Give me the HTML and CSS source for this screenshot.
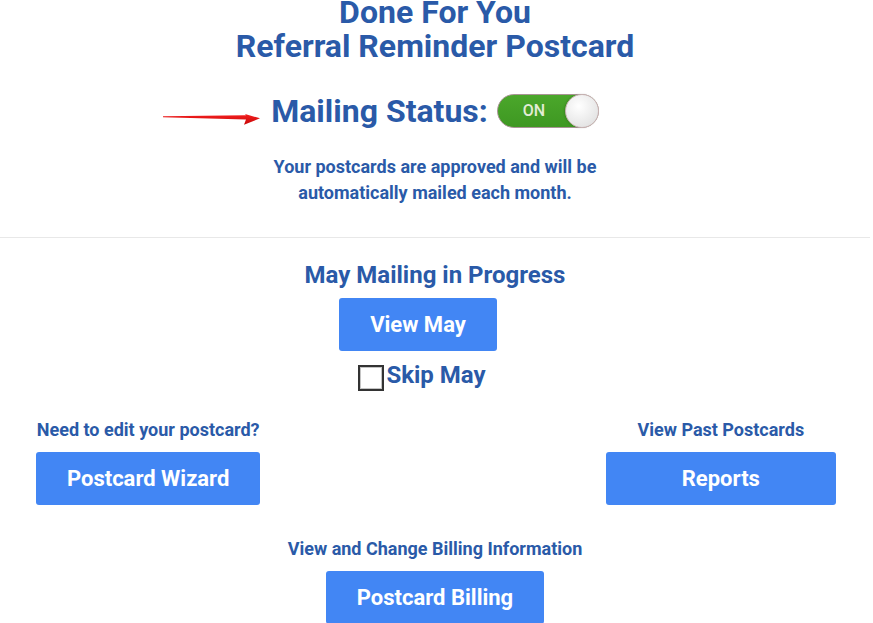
FILE: index.html
```html
<!DOCTYPE html>
<html lang="en">
<head>
<meta charset="utf-8">
<title>Done For You Referral Reminder Postcard</title>
<link rel="stylesheet" href="styles.css">
</head>
<body>
<main class="page">
  <h1 class="title">Done For You<br>Referral Reminder Postcard</h1>

  <div class="status-row">
    <svg class="arrow" width="98" height="17" viewBox="0 0 98 17" aria-hidden="true">
      <defs>
        <linearGradient id="ag" x1="0" y1="0" x2="0" y2="1">
          <stop offset="0" stop-color="#f52020"/>
          <stop offset="1" stop-color="#c60606"/>
        </linearGradient>
      </defs>
      <polygon points="0,7.2 83,6.2 82,5 97,9.3 81,15.8 83,10.6 0,8.3" fill="url(#ag)"/>
    </svg>
    <span class="status-label">Mailing Status:</span>
    <span class="toggle"><span class="toggle-text">ON</span><span class="knob"></span></span>
  </div>

  <p class="approved">Your postcards are approved and will be<br>automatically mailed each month.</p>

  <hr class="divider">

  <section class="mailing">
    <h2 class="mailing-title">May Mailing in Progress</h2>
    <a class="btn btn-view">View May</a>
    <label class="skip"><span class="box"></span>Skip May</label>
  </section>

  <div class="tools">
    <div class="tool">
      <div class="tool-label">Need to edit your postcard?</div>
      <a class="btn btn-wizard">Postcard Wizard</a>
    </div>
    <div class="tool"></div>
    <div class="tool">
      <div class="tool-label">View Past Postcards</div>
      <a class="btn btn-reports">Reports</a>
    </div>
  </div>

  <div class="billing">
    <div class="tool-label">View and Change Billing Information</div>
    <a class="btn btn-billing">Postcard Billing</a>
  </div>
</main>
</body>
</html>
```

FILE: styles.css
```css
html, body {
  margin: 0;
  padding: 0;
  background: #ffffff;
}
body {
  font-family: Roboto, "Liberation Sans", Arial, sans-serif;
  color: #2a5aa8;
  overflow: hidden;
}
.page {
  width: 870px;
  display: flex;
  flex-direction: column;
  align-items: center;
}
.title {
  margin: -5px 0 0 0;
  font-size: 32px;
  line-height: 34px;
  font-weight: 700;
  text-align: center;
}
.status-row {
  position: relative;
  display: flex;
  align-items: center;
  height: 36px;
  margin-top: 30px;
}
.arrow {
  position: absolute;
  right: calc(100% + 10px);
  top: 16px;
  display: block;
}
.status-label {
  font-size: 32px;
  font-weight: 700;
  line-height: 36px;
}
.toggle {
  position: relative;
  display: inline-block;
  width: 100px;
  height: 32px;
  margin-left: 9px;
  border-radius: 17px;
  background: linear-gradient(#4ba72b, #3e9822);
  border: 1px solid #a89494;
}
.toggle-text {
  position: absolute;
  left: 25px;
  top: 7px;
  font-size: 16px;
  font-weight: 500;
  color: #e3ecd6;
  line-height: 18px;
}
.knob {
  position: absolute;
  right: -1px;
  top: -1px;
  width: 34px;
  height: 34px;
  box-sizing: border-box;
  border: 1px solid #c9b4b4;
  border-radius: 50%;
  background: radial-gradient(circle at 40% 35%, #ffffff, #e6e6e6 70%, #d8d8d8);
  box-shadow: -1px 0 2px rgba(0,0,0,0.15);
}
.approved {
  margin: 25px 0 0 0;
  font-size: 18px;
  line-height: 26px;
  font-weight: 700;
  text-align: center;
}
.divider {
  width: 870px;
  align-self: flex-start;
  margin: 31px 0 0 0;
  border: 0;
  border-top: 1px solid #e8e8e8;
}
.mailing {
  display: flex;
  flex-direction: column;
  align-items: center;
}
.mailing-title {
  margin: 23px 0 0 0;
  font-size: 24px;
  line-height: 28px;
  font-weight: 700;
}
.btn {
  display: flex;
  align-items: center;
  justify-content: center;
  height: 53px;
  background: #4286f4;
  color: #ffffff;
  border-radius: 3px;
  font-size: 22px;
  font-weight: 700;
  text-decoration: none;
}
.btn-view {
  width: 158px;
  margin-top: 9px;
  margin-right: 34px;
}
.skip {
  display: flex;
  align-items: center;
  height: 28px;
  margin-top: 10px;
  padding-right: 26px;
  font-size: 24px;
  font-weight: 700;
  line-height: 28px;
}
.box {
  width: 22px;
  height: 22px;
  margin-top: 5px;
  margin-right: 2px;
  border: 2px solid #333333;
  box-shadow: inset 0 0 0 1px #c4c4c4;
  background: #ffffff;
}
.tools {
  box-sizing: border-box;
  width: 870px;
  padding: 0 6px 0 5px;
  display: grid;
  grid-template-columns: 1fr 1fr 1fr;
  margin-top: 31px;
}
.tool {
  display: flex;
  flex-direction: column;
  align-items: center;
}
.tool-label {
  font-size: 18px;
  line-height: 20px;
  font-weight: 700;
}
.btn-wizard {
  width: 224px;
  margin-top: 12px;
}
.btn-reports {
  width: 230px;
  margin-top: 12px;
}
.billing {
  display: flex;
  flex-direction: column;
  align-items: center;
  margin-top: 34px;
}
.btn-billing {
  width: 218px;
  margin-top: 12px;
}
```
